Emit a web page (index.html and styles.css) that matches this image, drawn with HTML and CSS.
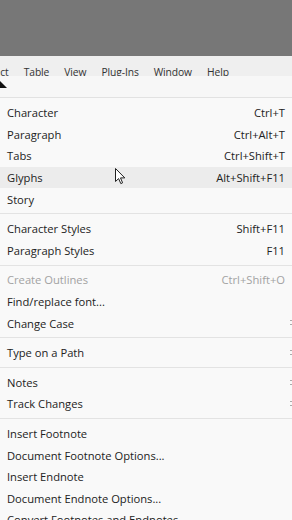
FILE: index.html
```html
<!DOCTYPE html>
<html lang="en">
<head>
    <meta charset="UTF-8">
    <meta name="viewport" content="width=device-width, initial-scale=1.0">
    <title>Type Menu</title>
    <link rel="stylesheet" href="styles.css">
</head>
<body>
    <!-- Window title area -->
    <div class="titlebar"></div>

    <!-- Menu bar -->
    <nav class="menubar">
        <span class="first">Object</span>
        <span>Table</span>
        <span>View</span>
        <span>Plug-Ins</span>
        <span>Window</span>
        <span>Help</span>
    </nav>

    <!-- Control bar -->
    <div class="toolbar">
        <svg class="tool-arrow" width="8" height="8" viewBox="0 0 8 8"><path d="M0 0 L7 7 L0 7 Z" fill="#111"/></svg>
    </div>

    <!-- Dropdown -->
    <div class="menu">
        <div class="item"><span>Character</span><span>Ctrl+T</span></div>
        <div class="item"><span>Paragraph</span><span>Ctrl+Alt+T</span></div>
        <div class="item"><span>Tabs</span><span>Ctrl+Shift+T</span></div>
        <div class="item hover"><span>Glyphs</span><span>Alt+Shift+F11</span></div>
        <div class="item"><span>Story</span><span></span></div>
        <div class="sep"></div>
        <div class="item"><span>Character Styles</span><span>Shift+F11</span></div>
        <div class="item"><span>Paragraph Styles</span><span>F11</span></div>
        <div class="sep"></div>
        <div class="item disabled"><span>Create Outlines</span><span>Ctrl+Shift+O</span></div>
        <div class="item"><span>Find/replace font...</span><span></span></div>
        <div class="item sub"><span>Change Case</span><span></span></div>
        <div class="sep"></div>
        <div class="item sub"><span>Type on a Path</span><span></span></div>
        <div class="sep"></div>
        <div class="item sub"><span>Notes</span><span></span></div>
        <div class="item sub"><span>Track Changes</span><span></span></div>
        <div class="sep"></div>
        <div class="item"><span>Insert Footnote</span><span></span></div>
        <div class="item"><span>Document Footnote Options...</span><span></span></div>
        <div class="item"><span>Insert Endnote</span><span></span></div>
        <div class="item"><span>Document Endnote Options...</span><span></span></div>
        <div class="item"><span>Convert Footnotes and Endnotes</span><span></span></div>
    </div>

    <!-- Mouse pointer -->
    <svg class="pointer" width="12" height="18" viewBox="0 0 12 18">
        <path d="M0.5 0.5 L0.5 13.5 L3.6 10.6 L5.8 15.6 L7.6 14.8 L5.5 9.9 L9.8 9.9 Z" fill="#fff" stroke="#222" stroke-width="1"/>
    </svg>
</body>
</html>
```

FILE: styles.css
```css
body {
    margin: 0;
    padding: 0;
    width: 292px;
    height: 520px;
    overflow: hidden;
    background-color: #f9f9f9;
    font-family: "Open Sans", Arial, sans-serif;
    color: #222;
    position: relative;
}

.titlebar {
    height: 56px;
    background-color: #777;
}

.menubar {
    height: 20px;
    background-color: #efefef;
    display: flex;
    gap: 15px;
    overflow: hidden;
    font-size: 10.3px;
    letter-spacing: -0.1px;
    line-height: 14px;
    padding-top: 9px;
    box-sizing: border-box;
    color: #333;
    white-space: nowrap;
}

.menubar .first {
    margin-left: -22px;
}

.toolbar {
    height: 21px;
    background-color: #f7f7f7;
    border-bottom: 1px solid #e2e2e2;
    position: relative;
}

.tool-arrow {
    position: absolute;
    left: 0;
    top: 5px;
}

.menu {
    padding-top: 4px;
}

.item {
    height: 21.6px;
    display: flex;
    justify-content: space-between;
    align-items: center;
    padding: 0 7px;
    font-size: 11.2px;
    white-space: nowrap;
    position: relative;
}

.item.hover {
    background-color: #ececec;
}

.item.disabled {
    color: #a2a2a2;
}

.item.sub::after {
    content: "";
    position: absolute;
    right: 0;
    top: 8px;
    width: 2px;
    height: 5px;
    border-top: 1px solid #aaa;
    border-bottom: 1px solid #aaa;
    box-sizing: border-box;
}

.sep {
    height: 1px;
    margin: 3.5px 0;
    background-color: #e3e3e3;
}

.pointer {
    position: absolute;
    left: 115px;
    top: 168px;
}
```
